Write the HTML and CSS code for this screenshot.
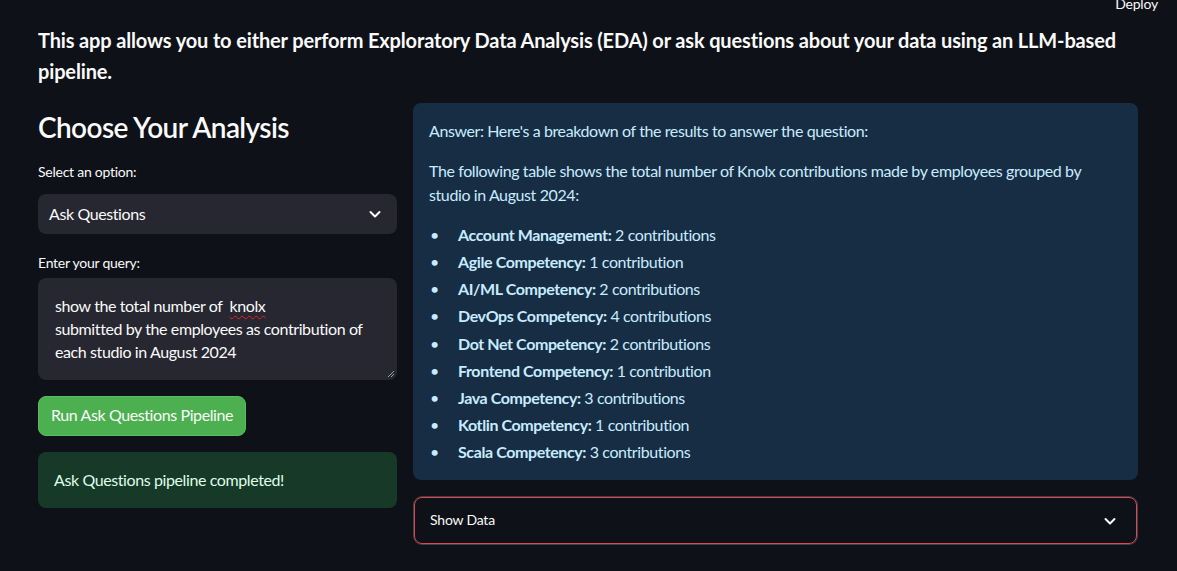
FILE: index.html
```html
<!DOCTYPE html>
<html lang="en">
<head>
<meta charset="utf-8">
<title>EDA / LLM App</title>
<link rel="stylesheet" href="styles.css">
</head>
<body>
<header class="toolbar"><span class="deploy">Deploy</span></header>
<main class="main">
  <p class="intro">This app allows you to either perform Exploratory Data Analysis (EDA) or ask questions about your data using an LLM-based pipeline.</p>
  <div class="columns">
    <section class="left">
      <h3 class="title">Choose Your Analysis</h3>
      <label class="label label-select">Select an option:</label>
      <div class="select">
        <span>Ask Questions</span>
        <svg class="chev" width="14" height="14" viewBox="0 0 14 14"><polyline points="2.5,5 7,9.5 11.5,5" fill="none" stroke="#fafafa" stroke-width="2" stroke-linecap="round" stroke-linejoin="round"/></svg>
      </div>
      <label class="label label-query">Enter your query:</label>
      <div class="textarea">show the total number of &nbsp;<span class="spell">knolx</span><br>submitted by the employees as contribution of<br>each studio in August 2024
        <svg class="grip" width="8" height="8" viewBox="0 0 8 8"><line x1="1" y1="7" x2="7" y2="1" stroke="#9a9aa0" stroke-width="1"/><line x1="4" y1="7" x2="7" y2="4" stroke="#9a9aa0" stroke-width="1"/></svg>
      </div>
      <button class="run">Run Ask Questions Pipeline</button>
      <div class="success"><span>Ask Questions pipeline completed!</span></div>
    </section>
    <section class="right">
      <div class="info">
        <p>Answer: Here's a breakdown of the results to answer the question:</p>
        <p>The following table shows the total number of Knolx contributions made by employees grouped by studio in August 2024:</p>
        <ul class="list">
          <li><b>Account Management:</b> 2 contributions</li>
          <li><b>Agile Competency:</b> 1 contribution</li>
          <li><b>AI/ML Competency:</b> 2 contributions</li>
          <li><b>DevOps Competency:</b> 4 contributions</li>
          <li><b>Dot Net Competency:</b> 2 contributions</li>
          <li><b>Frontend Competency:</b> 1 contribution</li>
          <li><b>Java Competency:</b> 3 contributions</li>
          <li><b>Kotlin Competency:</b> 1 contribution</li>
          <li><b>Scala Competency:</b> 3 contributions</li>
        </ul>
      </div>
      <div class="expander">
        <span>Show Data</span>
        <svg class="chev" width="14" height="14" viewBox="0 0 14 14"><polyline points="2.5,5 7,9.5 11.5,5" fill="none" stroke="#fafafa" stroke-width="2" stroke-linecap="round" stroke-linejoin="round"/></svg>
      </div>
    </section>
  </div>
</main>
</body>
</html>
```
FILE: styles.css
```css
* { box-sizing: border-box; }
html, body { margin: 0; padding: 0; }
body {
  background: #0e1117;
  color: #fafafa;
  font-family: "Source Sans Pro", Lato, "Liberation Sans", sans-serif;
  font-size: 16px;
  letter-spacing: -0.4px;
  width: 1177px;
  height: 571px;
  overflow: hidden;
}
.toolbar {
  height: 0;
  display: flex;
  justify-content: flex-end;
  padding-right: 19px;
}
.deploy {
  font-size: 14px;
  line-height: 20px;
  margin-top: -6px;
  color: #fafafa;
  letter-spacing: -0.2px;
}
.main {
  width: 1177px;
  padding: 0 39px 0 38px;
}
.intro {
  margin: 25px 0 16px;
  font-size: 20px;
  font-weight: 700;
  line-height: 31px;
  letter-spacing: -0.15px;
}
.columns {
  display: flex;
  gap: 16px;
}
.left {
  width: 359px;
  display: flex;
  flex-direction: column;
}
.right {
  flex: 1;
  display: flex;
  flex-direction: column;
}
.title {
  margin: 7px 0 0;
  font-size: 28px;
  font-weight: 600;
  line-height: 34px;
  letter-spacing: -0.6px;
}
.label {
  font-size: 14px;
  line-height: 20px;
  display: block;
  letter-spacing: -0.25px;
}
.label-select { margin-top: 18px; }
.label-query { margin-top: 19px; }
.select {
  margin-top: 12px;
  height: 40px;
  background: #262730;
  border-radius: 8px;
  display: flex;
  align-items: center;
  justify-content: space-between;
  padding: 0 15px 0 11px;
  font-size: 16px;
}
.select span { margin-top: -2px; }
.textarea {
  position: relative;
  margin-top: 5px;
  height: 102px;
  background: #262730;
  border-radius: 8px;
  padding: 16px 16px 0 17px;
  line-height: 23px;
  font-size: 16px;
}
.spell {
  text-decoration: underline wavy #e0242f;
  text-decoration-thickness: 1px;
  text-underline-offset: 3px;
}
.grip {
  position: absolute;
  right: 2px;
  bottom: 2px;
}
.run {
  margin-top: 16px;
  align-self: flex-start;
  height: 40px;
  background: #4caf50;
  color: #fafafa;
  border: 1px solid #5dbb61;
  border-radius: 8px;
  font-family: inherit;
  font-size: 16px;
  letter-spacing: -0.4px;
  padding: 0 12px 3px 12px;
  white-space: nowrap;
}
.success {
  margin-top: 16px;
  height: 56px;
  background: #173928;
  color: #dffde9;
  border-radius: 8px;
  padding: 0 16px 2px;
  display: flex;
  align-items: center;
  font-size: 16px;
}
.info {
  background: #172d43;
  color: #c7ebff;
  border-radius: 8px;
  padding: 16px 16px 16px 16px;
  line-height: 24px;
  height: 377px;
}
.info p { margin: 0 0 16px; }
.list {
  list-style: none;
  margin: 0;
  padding: 0;
}
.list li { margin-bottom: 3.15px; }
.list li::before {
  content: "\2022";
  display: inline-block;
  width: 28px;
  padding-left: 1px;
}
.list b { font-weight: 700; }
.expander {
  margin: 17px 1px 0;
  height: 47px;
  border: 1px solid #e0464c;
  box-shadow: 0 0 0 1px rgba(120,120,130,0.45);
  border-radius: 8px;
  display: flex;
  align-items: center;
  justify-content: space-between;
  padding: 0 19px 2px 15px;
  font-size: 14px;
  letter-spacing: -0.2px;
}
.expander .chev { margin-top: 2px; }
```
